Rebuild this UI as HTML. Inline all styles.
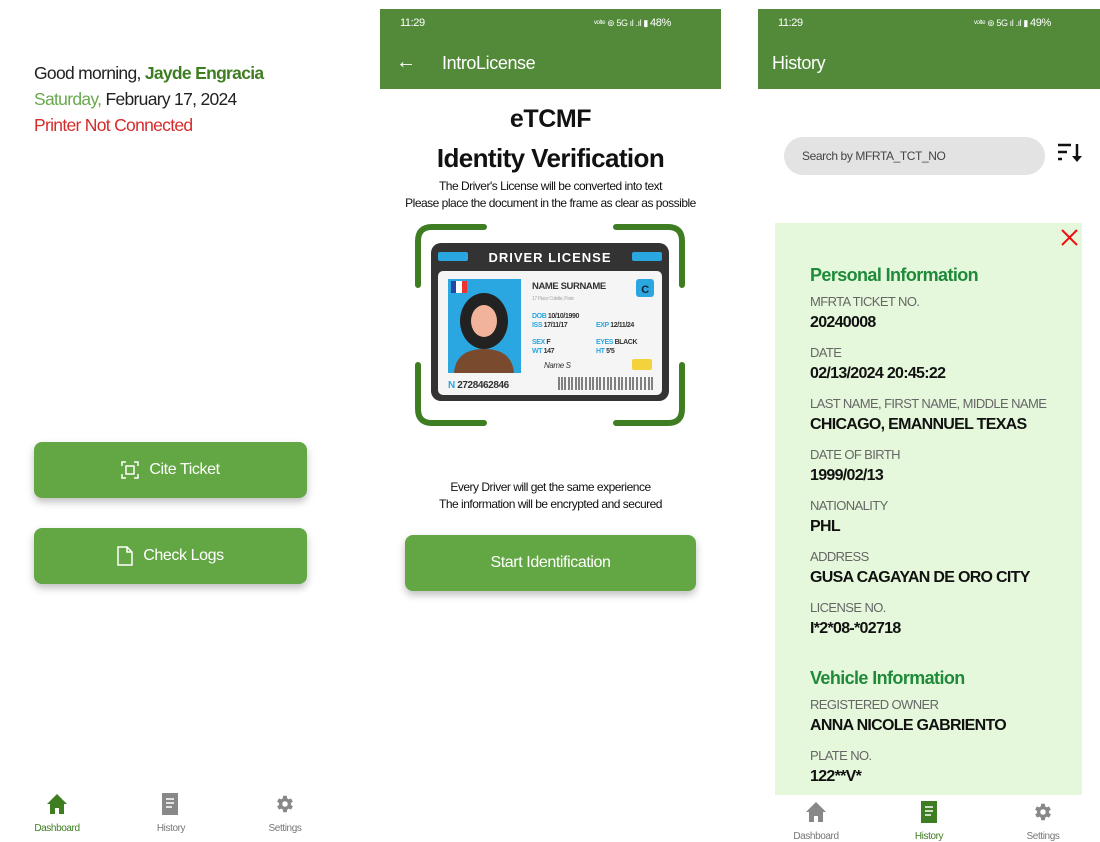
<!DOCTYPE html>
<html><head><meta charset="utf-8"><style>
*{margin:0;padding:0;box-sizing:border-box}
body{width:1100px;height:842px;background:#fff;font-family:"Liberation Sans",sans-serif;position:relative;overflow:hidden;letter-spacing:-0.4px}
.a{position:absolute;white-space:nowrap}
.btn{position:absolute;background:#62a744;border-radius:8px;color:#fff;font-size:16px;display:flex;align-items:center;justify-content:center;box-shadow:0 4px 8px rgba(0,0,0,.25)}
.hdr{position:absolute;background:#538a3a;color:#fff}
.lbl{position:absolute;left:810px;font-size:13px;color:#666;white-space:nowrap;letter-spacing:-0.6px}
.val{position:absolute;left:810px;font-size:16px;font-weight:bold;color:#111;white-space:nowrap;letter-spacing:-0.7px}
.sec{position:absolute;left:810px;font-size:18px;font-weight:bold;color:#1f8a3a;white-space:nowrap;letter-spacing:-0.6px}
.nav{position:absolute;font-size:10px;color:#777;text-align:center;width:60px}
</style></head><body>
<!-- left panel -->
<div class="a" style="left:34px;top:63px;font-size:17.5px;color:#222;letter-spacing:-0.7px">Good morning, <b style="color:#3f7d22">Jayde Engracia</b></div>
<div class="a" style="left:34px;top:89px;font-size:17.5px;color:#222;letter-spacing:-0.7px"><span style="color:#6aa84f">Saturday,</span> February 17, 2024</div>
<div class="a" style="left:34px;top:115px;font-size:17.5px;color:#d52b2b;letter-spacing:-0.7px">Printer Not Connected</div>
<div class="btn" style="left:34px;top:442px;width:273px;height:56px"><svg width="18" height="18" viewBox="0 0 18 18" fill="none" stroke="#fff" stroke-width="1.5" style="margin-right:10px"><path d="M1 5V1h4M13 1h4v4M17 13v4h-4M5 17H1v-4"/><rect x="5" y="5" width="8" height="8"/></svg>Cite Ticket</div>
<div class="btn" style="left:34px;top:528px;width:273px;height:56px"><svg width="16" height="20" viewBox="0 0 16 20" fill="none" stroke="#fff" stroke-width="1.5" style="margin-right:10px"><path d="M1 1h9l5 5v13H1z M10 1v5h5"/></svg>Check Logs</div>
<svg class="a" style="left:46px;top:793px" width="22" height="22" viewBox="0 0 22 22"><path d="M11 1L1 11h3v10h5v-6h4v6h5V11h3z" fill="#3f7d22"/></svg>
<div class="nav" style="left:27px;top:823px;color:#3f7d22">Dashboard</div>
<svg class="a" style="left:162px;top:793px" width="16" height="22"><rect width="16" height="22" fill="#888"/><path d="M4 6h8M4 10h8M4 14h6" stroke="#fff" stroke-width="1.5"/></svg>
<div class="nav" style="left:141px;top:823px">History</div>
<svg class="a" style="left:274px;top:793px" width="22" height="22" viewBox="0 0 24 24"><path d="M19.4 13a7.6 7.6 0 000-2l2.1-1.6-2-3.5-2.5 1a7.5 7.5 0 00-1.7-1L15 3h-4l-.4 2.9a7.5 7.5 0 00-1.7 1l-2.5-1-2 3.5L6.6 11a7.6 7.6 0 000 2l-2.1 1.6 2 3.5 2.5-1a7.5 7.5 0 001.7 1L11 21h4l.4-2.9a7.5 7.5 0 001.7-1l2.5 1 2-3.5z" transform="translate(-1,0)" fill="#888"/><circle cx="12" cy="12" r="3" fill="#fff"/></svg>
<div class="nav" style="left:255px;top:823px">Settings</div>

<!-- middle panel -->
<div class="hdr" style="left:380px;top:9px;width:341px;height:80px">
<div class="a" style="left:20px;top:8px;font-size:11px">11:29</div>
<div class="a" style="left:214px;top:8px;font-size:9px">ᵛᵒˡᵗᵉ ⊚ 5G ıl .ıl ▮ <span style="font-size:11px">48%</span></div>
<div class="a" style="left:16px;top:42px;font-size:20px">←</div>
<div class="a" style="left:62px;top:44px;font-size:18px">IntroLicense</div>
</div>
<div class="a" style="left:380px;width:341px;top:105px;text-align:center;font-size:25px;font-weight:bold;color:#111">eTCMF</div>
<div class="a" style="left:380px;width:341px;top:143px;text-align:center;font-size:26px;font-weight:bold;color:#111;letter-spacing:-0.6px">Identity Verification</div>
<div class="a" style="left:380px;width:341px;top:178px;text-align:center;font-size:12px;color:#111;line-height:17px;letter-spacing:-0.5px">The Driver's License will be converted into text<br>Please place the document in the frame as clear as possible</div>
<svg class="a" style="left:414px;top:223px" width="272" height="203" viewBox="0 0 272 203">
<g fill="none" stroke="#3f7d22" stroke-width="6" stroke-linecap="round"><path d="M4 62V18Q4 4 18 4h52M202 4h52q14 0 14 14v44M268 142v44q0 14-14 14h-52M70 200H18Q4 200 4 186v-44"/></g>
<rect x="17" y="20" width="238" height="158" rx="10" fill="#333"/>
<rect x="24" y="29" width="30" height="9" rx="2" fill="#2aa6e0"/><rect x="218" y="29" width="30" height="9" rx="2" fill="#2aa6e0"/>
<text x="136" y="39" text-anchor="middle" font-size="13" font-weight="bold" fill="#fff" letter-spacing="1">DRIVER LICENSE</text>
<rect x="24" y="48" width="224" height="124" rx="5" fill="#f5f5f5"/>
<rect x="34" y="56" width="73" height="94" fill="#2aa6e0"/>
<rect x="37" y="58" width="16" height="12" fill="#e33"/><rect x="37" y="58" width="11" height="12" fill="#fff"/><rect x="37" y="58" width="5" height="12" fill="#2546a6"/>
<ellipse cx="70" cy="98" rx="24" ry="28" fill="#222"/><path d="M40 150q2-24 30-24t30 24z" fill="#7a4a2e"/><ellipse cx="70" cy="98" rx="13" ry="16" fill="#f1b49a"/>
<text x="118" y="66" font-size="9.5" font-weight="bold" fill="#333">NAME SURNAME</text>
<rect x="222" y="56" width="18" height="18" rx="3" fill="#2aa6e0"/><text x="231" y="70" text-anchor="middle" font-size="11" font-weight="bold" fill="#123">C</text>
<text x="118" y="77" font-size="5" fill="#aaa">17 Place Colette, Paris</text>
<text x="118" y="95" font-size="7" font-weight="bold" fill="#333"><tspan fill="#2aa6e0">DOB</tspan> 10/10/1990</text>
<text x="118" y="104" font-size="7" font-weight="bold" fill="#333"><tspan fill="#2aa6e0">ISS</tspan>  17/11/17</text>
<text x="182" y="104" font-size="7" font-weight="bold" fill="#333"><tspan fill="#2aa6e0">EXP</tspan> 12/11/24</text>
<text x="118" y="121" font-size="7" font-weight="bold" fill="#333"><tspan fill="#2aa6e0">SEX</tspan>  F</text>
<text x="182" y="121" font-size="7" font-weight="bold" fill="#333"><tspan fill="#2aa6e0">EYES</tspan> BLACK</text>
<text x="118" y="130" font-size="7" font-weight="bold" fill="#333"><tspan fill="#2aa6e0">WT</tspan>  147</text>
<text x="182" y="130" font-size="7" font-weight="bold" fill="#333"><tspan fill="#2aa6e0">HT</tspan>  5'5</text>
<text x="130" y="145" font-size="8" font-style="italic" fill="#333">Name S</text>
<rect x="218" y="136" width="20" height="11" rx="2" fill="#f4d23c"/>
<text x="34" y="165" font-size="10" font-weight="bold" fill="#333"><tspan fill="#2aa6e0">N</tspan>  2728462846</text>
<g stroke="#333" stroke-width="1.2"><path d="M145 154v13M148 154v13M151 154v13M155 154v13M158 154v13M162 154v13M165 154v13M168 154v13M172 154v13M176 154v13M179 154v13M183 154v13M186 154v13M190 154v13M194 154v13M197 154v13M201 154v13M205 154v13M208 154v13M212 154v13M216 154v13M219 154v13M223 154v13M227 154v13M231 154v13M235 154v13M238 154v13"/></g>
</svg>
<div class="a" style="left:380px;width:341px;top:479px;text-align:center;font-size:12px;color:#111;line-height:17px;letter-spacing:-0.5px">Every Driver will get the same experience<br>The information will be encrypted and secured</div>
<div class="btn" style="left:405px;top:535px;width:291px;height:56px">Start Identification</div>

<!-- right panel -->
<div class="hdr" style="left:758px;top:9px;width:342px;height:80px">
<div class="a" style="left:20px;top:8px;font-size:11px">11:29</div>
<div class="a" style="left:216px;top:8px;font-size:9px">ᵛᵒˡᵗᵉ ⊚ 5G ıl .ıl ▮ <span style="font-size:11px">49%</span></div>
<div class="a" style="left:14px;top:44px;font-size:18px">History</div>
</div>
<div class="a" style="left:784px;top:137px;width:261px;height:38px;border-radius:19px;background:#e3e3e3;font-size:12px;color:#444;padding:12px 18px">Search by MFRTA_TCT_NO</div>
<svg class="a" style="left:1057px;top:142px" width="28" height="22" viewBox="0 0 28 22"><g stroke="#111" stroke-width="2.5"><path d="M1 3h13M1 10h9M1 17h4M20 2v16"/></g><path d="M15 14l5 6 5-6z" fill="#111"/></svg>
<div class="a" style="left:775px;top:223px;width:307px;height:572px;background:#e6f8dc"></div>
<svg class="a" style="left:1060px;top:228px" width="19" height="19"><path d="M2 2l15 15M17 2L2 17" stroke="#e11" stroke-width="2"/></svg>
<div class="sec" style="top:265px">Personal Information</div>
<div class="lbl" style="top:294px">MFRTA TICKET NO.</div><div class="val" style="top:314px">20240008</div>
<div class="lbl" style="top:345px">DATE</div><div class="val" style="top:365px">02/13/2024 20:45:22</div>
<div class="lbl" style="top:396px">LAST NAME, FIRST NAME, MIDDLE NAME</div><div class="val" style="top:416px">CHICAGO, EMANNUEL TEXAS</div>
<div class="lbl" style="top:447px">DATE OF BIRTH</div><div class="val" style="top:467px">1999/02/13</div>
<div class="lbl" style="top:498px">NATIONALITY</div><div class="val" style="top:518px">PHL</div>
<div class="lbl" style="top:549px">ADDRESS</div><div class="val" style="top:569px">GUSA CAGAYAN DE ORO CITY</div>
<div class="lbl" style="top:600px">LICENSE NO.</div><div class="val" style="top:620px">I*2*08-*02718</div>
<div class="sec" style="top:668px">Vehicle Information</div>
<div class="lbl" style="top:697px">REGISTERED OWNER</div><div class="val" style="top:717px">ANNA NICOLE GABRIENTO</div>
<div class="lbl" style="top:748px">PLATE NO.</div><div class="val" style="top:768px">122**V*</div>
<svg class="a" style="left:805px;top:801px" width="22" height="22" viewBox="0 0 22 22"><path d="M11 1L1 11h3v10h5v-6h4v6h5V11h3z" fill="#888"/></svg>
<div class="nav" style="left:786px;top:831px">Dashboard</div>
<svg class="a" style="left:921px;top:801px" width="16" height="22"><rect width="16" height="22" fill="#3f7d22"/><path d="M4 6h8M4 10h8M4 14h6" stroke="#fff" stroke-width="1.5"/></svg>
<div class="nav" style="left:899px;top:831px;color:#3f7d22">History</div>
<svg class="a" style="left:1032px;top:801px" width="22" height="22" viewBox="0 0 24 24"><path d="M19.4 13a7.6 7.6 0 000-2l2.1-1.6-2-3.5-2.5 1a7.5 7.5 0 00-1.7-1L15 3h-4l-.4 2.9a7.5 7.5 0 00-1.7 1l-2.5-1-2 3.5L6.6 11a7.6 7.6 0 000 2l-2.1 1.6 2 3.5 2.5-1a7.5 7.5 0 001.7 1L11 21h4l.4-2.9a7.5 7.5 0 001.7-1l2.5 1 2-3.5z" transform="translate(-1,0)" fill="#888"/><circle cx="12" cy="12" r="3" fill="#fff"/></svg>
<div class="nav" style="left:1013px;top:831px">Settings</div>
</body></html>
